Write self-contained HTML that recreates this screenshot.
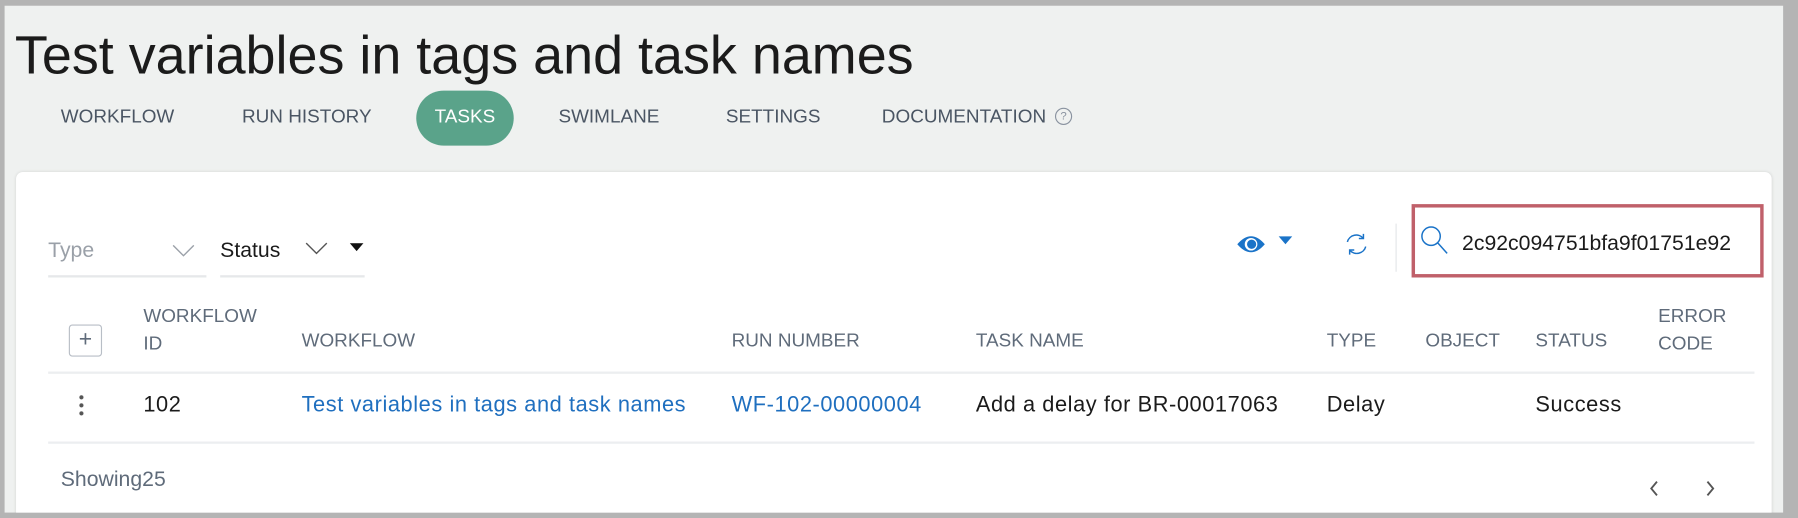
<!DOCTYPE html>
<html><head><meta charset="utf-8"><style>
html,body{margin:0;padding:0;width:1798px;height:518px;overflow:hidden;background:#b4b4b4;font-family:"Liberation Sans",sans-serif;}
#w{position:absolute;left:0;top:0;width:1568px;height:452px;transform:scale(1.1467);transform-origin:0 0;}
#bg{position:absolute;left:4px;top:5px;width:1551px;height:442px;background:#eff1f0;overflow:hidden;}
.a{position:absolute;white-space:nowrap;}
.tab{font-size:16.5px;color:#4a5563;top:93px;}
.card{position:absolute;left:10px;top:145px;width:1531px;height:320px;background:#fff;border-radius:6px;box-shadow:0 0 3px rgba(0,0,0,.12);}
.h{font-size:16.5px;color:#5f6b7a;}
.r{font-size:19px;letter-spacing:0.5px;color:#1b1b1b;top:343px;}
.lnk{color:#1f6fbf;}
</style></head><body><div id="w">
<div id="bg"><div class="card"></div></div>
<div class="a" style="left:13px;top:20px;font-size:47px;color:#1b1b1b;">Test variables in tags and task names</div>
<div class="a tab" style="left:53px">WORKFLOW</div>
<div class="a tab" style="left:211px">RUN HISTORY</div>
<div class="a" style="left:363px;top:79px;width:85px;height:48px;border-radius:24px;background:#5aa38a;"></div>
<div class="a tab" style="left:379px;color:#fff">TASKS</div>
<div class="a tab" style="left:487px">SWIMLANE</div>
<div class="a tab" style="left:633px">SETTINGS</div>
<div class="a tab" style="left:769px">DOCUMENTATION</div>
<div class="a" style="left:920px;top:94px;width:13px;height:13px;border:1px solid #8a93a0;border-radius:50%;font-size:10px;line-height:13px;text-align:center;color:#8a93a0;">?</div>
<div class="a" style="left:42px;top:207px;font-size:18.5px;color:#9aa0a8;">Type</div>
<svg class="a" style="left:150px;top:213px" width="20" height="12"><path d="M1 1 L10 10 L19 1" fill="none" stroke="#9aa0a8" stroke-width="1.2"/></svg>
<div class="a" style="left:42px;top:240px;width:138px;height:2px;background:#e6e8ea;"></div>
<div class="a" style="left:192px;top:207px;font-size:18.5px;color:#1b1b1b;">Status</div>
<svg class="a" style="left:266px;top:211px" width="20" height="12"><path d="M1 1 L10 10 L19 1" fill="none" stroke="#555" stroke-width="1.2"/></svg>
<svg class="a" style="left:305px;top:212px" width="12" height="8"><path d="M0 0 L12 0 L6 7z" fill="#111"/></svg>
<div class="a" style="left:192px;top:240px;width:126px;height:2px;background:#e6e8ea;"></div>
<svg class="a" style="left:1078px;top:203px" width="26" height="20"><path d="M1 10 Q13 -4 25 10 Q13 24 1 10z" fill="#1a73c8"/><circle cx="13" cy="10" r="5.5" fill="#fff"/><circle cx="13.5" cy="10" r="4" fill="#1a73c8"/></svg>
<svg class="a" style="left:1115px;top:206px" width="12" height="8"><path d="M0 0 L12 0 L6 7z" fill="#1a73c8"/></svg>
<svg class="a" style="left:1171px;top:201px" width="24" height="24"><path d="M4 10 A8 8 0 0 1 18 7 M20 14 A8 8 0 0 1 6 17" fill="none" stroke="#1a73c8" stroke-width="1.3"/><path d="M18 3 L18 7 L14 7 M6 21 L6 17 L10 17" fill="none" stroke="#1a73c8" stroke-width="1.3"/></svg>
<div class="a" style="left:1217px;top:195px;width:1px;height:42px;background:#e4e6e8;"></div>
<div class="a" style="left:1231px;top:178px;width:301px;height:58px;border:3px solid #c0606a;"></div>
<svg class="a" style="left:1238px;top:196px" width="28" height="28"><circle cx="10" cy="10" r="8" fill="none" stroke="#1a73c8" stroke-width="1.3"/><path d="M16 16 L24 25" stroke="#1a73c8" stroke-width="1.3"/></svg>
<div class="a" style="left:1275px;top:201px;width:253px;overflow:hidden;font-size:18.5px;color:#1b1b1b;">2c92c094751bfa9f01751e92</div>
<div class="a" style="left:60px;top:283px;width:27px;height:26px;border:1px solid #b8bec6;border-radius:3px;text-align:center;font-size:20px;line-height:25px;color:#5f6b7a;">+</div>
<div class="a h" style="left:125px;top:264px;line-height:24px;">WORKFLOW<br>ID</div>
<div class="a h" style="left:263px;top:288px;">WORKFLOW</div>
<div class="a h" style="left:638px;top:288px;">RUN NUMBER</div>
<div class="a h" style="left:851px;top:288px;">TASK NAME</div>
<div class="a h" style="left:1157px;top:288px;">TYPE</div>
<div class="a h" style="left:1243px;top:288px;">OBJECT</div>
<div class="a h" style="left:1339px;top:288px;">STATUS</div>
<div class="a h" style="left:1446px;top:264px;line-height:24px;">ERROR<br>CODE</div>
<div class="a" style="left:42px;top:324px;width:1488px;height:2px;background:#eceef0;"></div>
<div class="a" style="left:69px;top:343px;width:4px;height:20px;background:radial-gradient(circle,#555 1.6px,transparent 2px) 0 0/4px 7px repeat-y;"></div>
<div class="a r" style="left:125px">102</div>
<div class="a r lnk" style="left:263px">Test variables in tags and task names</div>
<div class="a r lnk" style="left:638px">WF-102-00000004</div>
<div class="a r" style="left:851px">Add a delay for BR-00017063</div>
<div class="a r" style="left:1157px">Delay</div>
<div class="a r" style="left:1339px">Success</div>
<div class="a" style="left:42px;top:385px;width:1488px;height:2px;background:#eceef0;"></div>
<div class="a" style="left:53px;top:407px;font-size:18.5px;color:#5f6b7a;">Showing25</div>
<svg class="a" style="left:1437px;top:418px" width="10" height="16"><path d="M8 2 L3 8 L8 14" fill="none" stroke="#555" stroke-width="1.6"/></svg>
<svg class="a" style="left:1487px;top:418px" width="10" height="16"><path d="M2 2 L7 8 L2 14" fill="none" stroke="#555" stroke-width="1.6"/></svg>
</div></body></html>
